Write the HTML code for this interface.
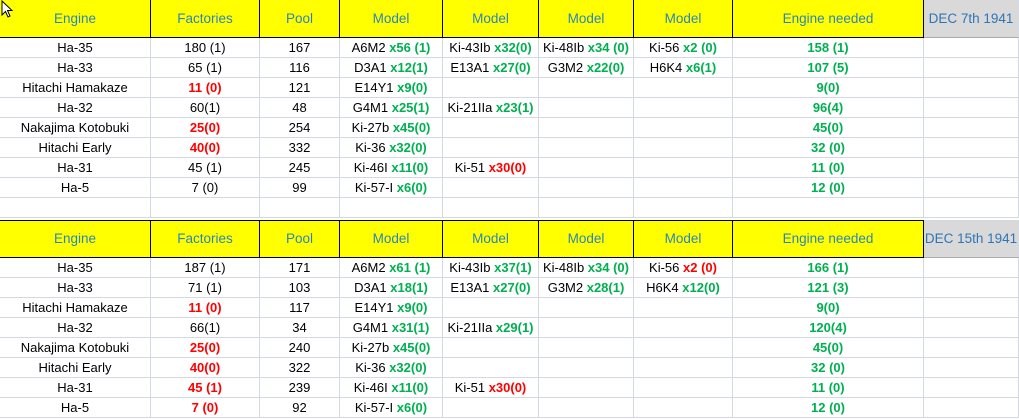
<!DOCTYPE html>
<html><head><meta charset="utf-8"><style>
body{margin:0;width:1019px;height:419px;overflow:hidden;background:#fff;font-family:"Liberation Sans",sans-serif;font-size:13px;color:#000;position:relative}
.r{position:absolute;left:0;height:20px;display:flex}
.r div{box-sizing:border-box;border-right:1px solid #d4d8e0;border-bottom:1px solid #d4d8e0;text-align:center;line-height:19px;white-space:nowrap;overflow:hidden}
.h div{background:#ffff00;border-right:1px solid #000;border-bottom:1px solid #000;border-top:1px solid #000;color:#2a86b8;font-size:13.5px}
.h div.d{background:#d9d9d9;border-color:#d4d8e0 #d4d8e0 #aaa #000;border-left:none;color:#2e75b6}
.c1{width:151px}.c2{width:109px}.c3{width:80px}.c4{width:103px}.c5{width:96px}.c6{width:95px}.c7{width:99px}.c8{width:191px}.c9{width:95px}
.g{color:#00b050;font-weight:bold}.rd{color:#ff0000;font-weight:bold}
</style></head><body>

<div class="r h" style="top:-1px;height:39px"><div class="c1" style="line-height:37px">Engine</div><div class="c2" style="line-height:37px">Factories</div><div class="c3" style="line-height:37px">Pool</div><div class="c4" style="line-height:37px">Model</div><div class="c5" style="line-height:37px">Model</div><div class="c6" style="line-height:37px">Model</div><div class="c7" style="line-height:37px">Model</div><div class="c8" style="line-height:37px">Engine needed</div><div class="c9 d" style="line-height:37px">DEC 7th 1941</div></div>

<div class="r" style="top:38px"><div class="c1">Ha-35</div><div class="c2">180 (1)</div><div class="c3">167</div><div class="c4">A6M2 <span class="g">x56 (1)</span></div><div class="c5">Ki-43Ib <span class="g">x32(0)</span></div><div class="c6">Ki-48Ib <span class="g">x34 (0)</span></div><div class="c7">Ki-56 <span class="g">x2 (0)</span></div><div class="c8 g">158 (1)</div><div class="c9"></div></div>
<div class="r" style="top:58px"><div class="c1">Ha-33</div><div class="c2">65 (1)</div><div class="c3">116</div><div class="c4">D3A1 <span class="g">x12(1)</span></div><div class="c5">E13A1 <span class="g">x27(0)</span></div><div class="c6">G3M2 <span class="g">x22(0)</span></div><div class="c7">H6K4 <span class="g">x6(1)</span></div><div class="c8 g">107 (5)</div><div class="c9"></div></div>
<div class="r" style="top:78px"><div class="c1">Hitachi Hamakaze</div><div class="c2 rd">11 (0)</div><div class="c3">121</div><div class="c4">E14Y1 <span class="g">x9(0)</span></div><div class="c5"></div><div class="c6"></div><div class="c7"></div><div class="c8 g">9(0)</div><div class="c9"></div></div>
<div class="r" style="top:98px"><div class="c1">Ha-32</div><div class="c2">60(1)</div><div class="c3">48</div><div class="c4">G4M1 <span class="g">x25(1)</span></div><div class="c5">Ki-21IIa <span class="g">x23(1)</span></div><div class="c6"></div><div class="c7"></div><div class="c8 g">96(4)</div><div class="c9"></div></div>
<div class="r" style="top:118px"><div class="c1">Nakajima Kotobuki</div><div class="c2 rd">25(0)</div><div class="c3">254</div><div class="c4">Ki-27b <span class="g">x45(0)</span></div><div class="c5"></div><div class="c6"></div><div class="c7"></div><div class="c8 g">45(0)</div><div class="c9"></div></div>
<div class="r" style="top:138px"><div class="c1">Hitachi Early</div><div class="c2 rd">40(0)</div><div class="c3">332</div><div class="c4">Ki-36 <span class="g">x32(0)</span></div><div class="c5"></div><div class="c6"></div><div class="c7"></div><div class="c8 g">32 (0)</div><div class="c9"></div></div>
<div class="r" style="top:158px"><div class="c1">Ha-31</div><div class="c2">45 (1)</div><div class="c3">245</div><div class="c4">Ki-46I <span class="g">x11(0)</span></div><div class="c5">Ki-51 <span class="rd">x30(0)</span></div><div class="c6"></div><div class="c7"></div><div class="c8 g">11 (0)</div><div class="c9"></div></div>
<div class="r" style="top:178px"><div class="c1">Ha-5</div><div class="c2">7 (0)</div><div class="c3">99</div><div class="c4">Ki-57-I <span class="g">x6(0)</span></div><div class="c5"></div><div class="c6"></div><div class="c7"></div><div class="c8 g">12 (0)</div><div class="c9"></div></div>
<div class="r" style="top:198px"><div class="c1"></div><div class="c2"></div><div class="c3"></div><div class="c4"></div><div class="c5"></div><div class="c6"></div><div class="c7"></div><div class="c8"></div><div class="c9"></div></div>

<div class="r h" style="top:220px;height:38px"><div class="c1" style="line-height:36px">Engine</div><div class="c2" style="line-height:36px">Factories</div><div class="c3" style="line-height:36px">Pool</div><div class="c4" style="line-height:36px">Model</div><div class="c5" style="line-height:36px">Model</div><div class="c6" style="line-height:36px">Model</div><div class="c7" style="line-height:36px">Model</div><div class="c8" style="line-height:36px">Engine needed</div><div class="c9 d" style="line-height:36px">DEC 15th 1941</div></div>

<div class="r" style="top:258px"><div class="c1">Ha-35</div><div class="c2">187 (1)</div><div class="c3">171</div><div class="c4">A6M2 <span class="g">x61 (1)</span></div><div class="c5">Ki-43Ib <span class="g">x37(1)</span></div><div class="c6">Ki-48Ib <span class="g">x34 (0)</span></div><div class="c7">Ki-56 <span class="rd">x2 (0)</span></div><div class="c8 g">166 (1)</div><div class="c9"></div></div>
<div class="r" style="top:278px"><div class="c1">Ha-33</div><div class="c2">71 (1)</div><div class="c3">103</div><div class="c4">D3A1 <span class="g">x18(1)</span></div><div class="c5">E13A1 <span class="g">x27(0)</span></div><div class="c6">G3M2 <span class="g">x28(1)</span></div><div class="c7">H6K4 <span class="g">x12(0)</span></div><div class="c8 g">121 (3)</div><div class="c9"></div></div>
<div class="r" style="top:298px"><div class="c1">Hitachi Hamakaze</div><div class="c2 rd">11 (0)</div><div class="c3">117</div><div class="c4">E14Y1 <span class="g">x9(0)</span></div><div class="c5"></div><div class="c6"></div><div class="c7"></div><div class="c8 g">9(0)</div><div class="c9"></div></div>
<div class="r" style="top:318px"><div class="c1">Ha-32</div><div class="c2">66(1)</div><div class="c3">34</div><div class="c4">G4M1 <span class="g">x31(1)</span></div><div class="c5">Ki-21IIa <span class="g">x29(1)</span></div><div class="c6"></div><div class="c7"></div><div class="c8 g">120(4)</div><div class="c9"></div></div>
<div class="r" style="top:338px"><div class="c1">Nakajima Kotobuki</div><div class="c2 rd">25(0)</div><div class="c3">240</div><div class="c4">Ki-27b <span class="g">x45(0)</span></div><div class="c5"></div><div class="c6"></div><div class="c7"></div><div class="c8 g">45(0)</div><div class="c9"></div></div>
<div class="r" style="top:358px"><div class="c1">Hitachi Early</div><div class="c2 rd">40(0)</div><div class="c3">322</div><div class="c4">Ki-36 <span class="g">x32(0)</span></div><div class="c5"></div><div class="c6"></div><div class="c7"></div><div class="c8 g">32 (0)</div><div class="c9"></div></div>
<div class="r" style="top:378px"><div class="c1">Ha-31</div><div class="c2 rd">45 (1)</div><div class="c3">239</div><div class="c4">Ki-46I <span class="g">x11(0)</span></div><div class="c5">Ki-51 <span class="rd">x30(0)</span></div><div class="c6"></div><div class="c7"></div><div class="c8 g">11 (0)</div><div class="c9"></div></div>
<div class="r" style="top:398px"><div class="c1">Ha-5</div><div class="c2 rd">7 (0)</div><div class="c3">92</div><div class="c4">Ki-57-I <span class="g">x6(0)</span></div><div class="c5"></div><div class="c6"></div><div class="c7"></div><div class="c8 g">12 (0)</div><div class="c9"></div></div>

<svg style="position:absolute;left:1px;top:0" width="14" height="20" viewBox="0 0 14 20"><path d="M1 1 L1 15 L4.5 11.5 L7 17 L9 16 L6.5 10.5 L11 10.5 Z" fill="#fff" stroke="#000" stroke-width="1"/></svg>
</body></html>
